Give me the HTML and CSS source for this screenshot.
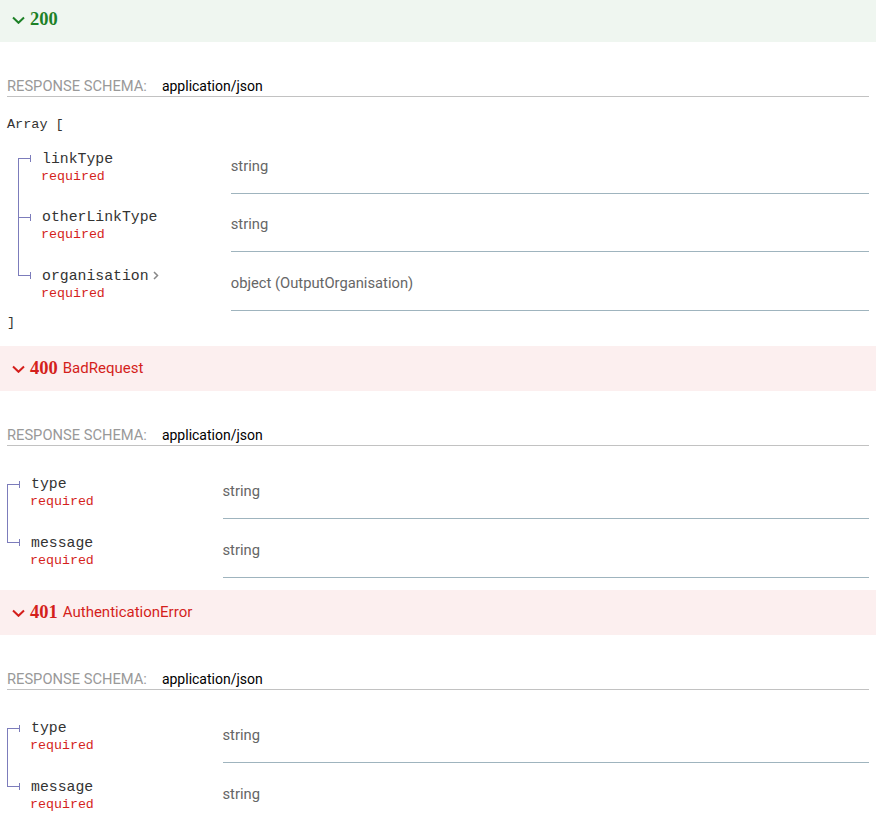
FILE: index.html
```html
<!DOCTYPE html>
<html>
<head>
<meta charset="utf-8">
<link rel="stylesheet" href="styles.css">
</head>
<body>
<div class="page">

  <section class="response">
    <div class="resp-head success">
      <svg class="chev" width="13" height="8" viewBox="0 0 13 8"><path d="M1 1.5 L6.5 6.8 L12 1.5" fill="none" stroke="currentColor" stroke-width="2"/></svg>
      <strong class="code-num">200</strong>
    </div>
    <div class="resp-body">
      <div class="schema-head"><span class="schema-label">Response Schema:</span><span class="mime">application/json</span></div>
      <div class="mono-line open">Array [</div>
      <div class="tree nested">
        <div class="row first">
          <div class="name-cell"><div class="name-line"><span class="bullet"></span><span class="pname">linkType</span></div><div class="req">required</div></div>
          <div class="type-cell">string</div>
        </div>
        <div class="row">
          <div class="name-cell"><div class="name-line"><span class="bullet"></span><span class="pname">otherLinkType</span></div><div class="req">required</div></div>
          <div class="type-cell">string</div>
        </div>
        <div class="row last">
          <div class="name-cell"><div class="name-line"><span class="bullet"></span><span class="pname">organisation</span><svg class="more" width="6" height="9" viewBox="0 0 6 9"><path d="M1 1 L4.5 4.5 L1 8" fill="none" stroke="currentColor" stroke-width="1.5"/></svg></div><div class="req">required</div></div>
          <div class="type-cell">object (OutputOrganisation)</div>
        </div>
      </div>
      <div class="mono-line close">]</div>
    </div>
  </section>

  <section class="response">
    <div class="resp-head error">
      <svg class="chev" width="13" height="8" viewBox="0 0 13 8"><path d="M1 1.5 L6.5 6.8 L12 1.5" fill="none" stroke="currentColor" stroke-width="2"/></svg>
      <strong class="code-num">400</strong><span class="desc">BadRequest</span>
    </div>
    <div class="resp-body">
      <div class="schema-head"><span class="schema-label">Response Schema:</span><span class="mime">application/json</span></div>
      <div class="tree">
        <div class="row first">
          <div class="name-cell"><div class="name-line"><span class="bullet"></span><span class="pname">type</span></div><div class="req">required</div></div>
          <div class="type-cell">string</div>
        </div>
        <div class="row last">
          <div class="name-cell"><div class="name-line"><span class="bullet"></span><span class="pname">message</span></div><div class="req">required</div></div>
          <div class="type-cell">string</div>
        </div>
      </div>
    </div>
  </section>

  <section class="response">
    <div class="resp-head error">
      <svg class="chev" width="13" height="8" viewBox="0 0 13 8"><path d="M1 1.5 L6.5 6.8 L12 1.5" fill="none" stroke="currentColor" stroke-width="2"/></svg>
      <strong class="code-num">401</strong><span class="desc">AuthenticationError</span>
    </div>
    <div class="resp-body">
      <div class="schema-head"><span class="schema-label">Response Schema:</span><span class="mime">application/json</span></div>
      <div class="tree">
        <div class="row first">
          <div class="name-cell"><div class="name-line"><span class="bullet"></span><span class="pname">type</span></div><div class="req">required</div></div>
          <div class="type-cell">string</div>
        </div>
        <div class="row last">
          <div class="name-cell"><div class="name-line"><span class="bullet"></span><span class="pname">message</span></div><div class="req">required</div></div>
          <div class="type-cell">string</div>
        </div>
      </div>
    </div>
  </section>

</div>
</body>
</html>
```

FILE: styles.css
```css
html, body {
  margin: 0;
  padding: 0;
  background: #ffffff;
}

body {
  font-family: Roboto, "Liberation Sans", sans-serif;
  font-size: 14.5px;
  color: #333333;
  overflow: hidden;
}

.page {
  margin-top: -3px;
}

.resp-head {
  display: flex;
  align-items: center;
  height: 45px;
  padding-left: 12px;
  box-sizing: border-box;
}

.resp-head.success {
  background: #eff6f0;
  color: #1d8127;
}

.resp-head.error {
  background: #fcefef;
  color: #d41f1c;
}

.chev {
  display: block;
  margin-right: 5px;
  margin-top: 1px;
}

.code-num {
  font-family: "Liberation Serif", serif;
  font-weight: bold;
  font-size: 18.5px;
}

.desc {
  font-size: 15px;
  margin-left: 5px;
}

.resp-body {
  padding: 0 7px;
}

.schema-head {
  margin-top: 33px;
  height: 22px;
  padding-top: 2px;
  box-sizing: border-box;
  line-height: 19px;
  border-bottom: 1px solid #c2c2c2;
  display: flex;
  align-items: flex-start;
}

.schema-label {
  color: #999999;
  text-transform: uppercase;
  font-size: 14.7px;
  margin-right: 15px;
}

.mime {
  color: #000000;
  font-size: 14px;
}

.mono-line {
  font-family: "Liberation Mono", monospace;
  font-size: 13.5px;
  line-height: 18px;
  color: #333333;
}

.mono-line.open {
  margin-top: 19px;
}

.mono-line.close {
  margin-top: 3px;
  margin-bottom: 14px;
}

.tree {
  margin-top: 15px;
  margin-bottom: 12px;
}

.tree.nested {
  margin: 1px 0 0 11px;
}

.row {
  display: grid;
  grid-template-columns: 25% 75%;
  height: 58.5px;
}

.name-cell {
  padding-top: 14.5px;
  background-image: linear-gradient(#7c7cbb, #7c7cbb);
  background-repeat: no-repeat;
  background-size: 1px 100%;
  background-position: 0 0;
}

.row.first .name-cell {
  background-size: 1px calc(100% - 23px);
  background-position: 0 23px;
}

.row.last .name-cell {
  background-size: 1px 24px;
  background-position: 0 0;
}

.name-line {
  display: flex;
  align-items: center;
  height: 18px;
}

.bullet {
  display: inline-flex;
  align-items: center;
  margin-right: 11px;
}

.bullet::before {
  content: "";
  display: block;
  width: 12px;
  height: 1px;
  background: #7c7cbb;
}

.bullet::after {
  content: "";
  display: block;
  width: 1px;
  height: 7px;
  background: #7c7cbb;
}

.pname {
  font-family: "Liberation Mono", monospace;
  font-size: 14.8px;
  color: #333333;
  line-height: 18px;
}

.more {
  display: block;
  color: #888888;
  margin-left: 4px;
}

.req {
  font-family: "Liberation Mono", monospace;
  font-size: 13.3px;
  line-height: 18px;
  color: #d41f1c;
  padding-left: 23px;
}

.type-cell {
  box-sizing: border-box;
  padding-top: 20.5px;
  line-height: 21px;
  font-size: 14.75px;
  color: #666666;
  border-bottom: 1px solid #9fb4be;
}
```
